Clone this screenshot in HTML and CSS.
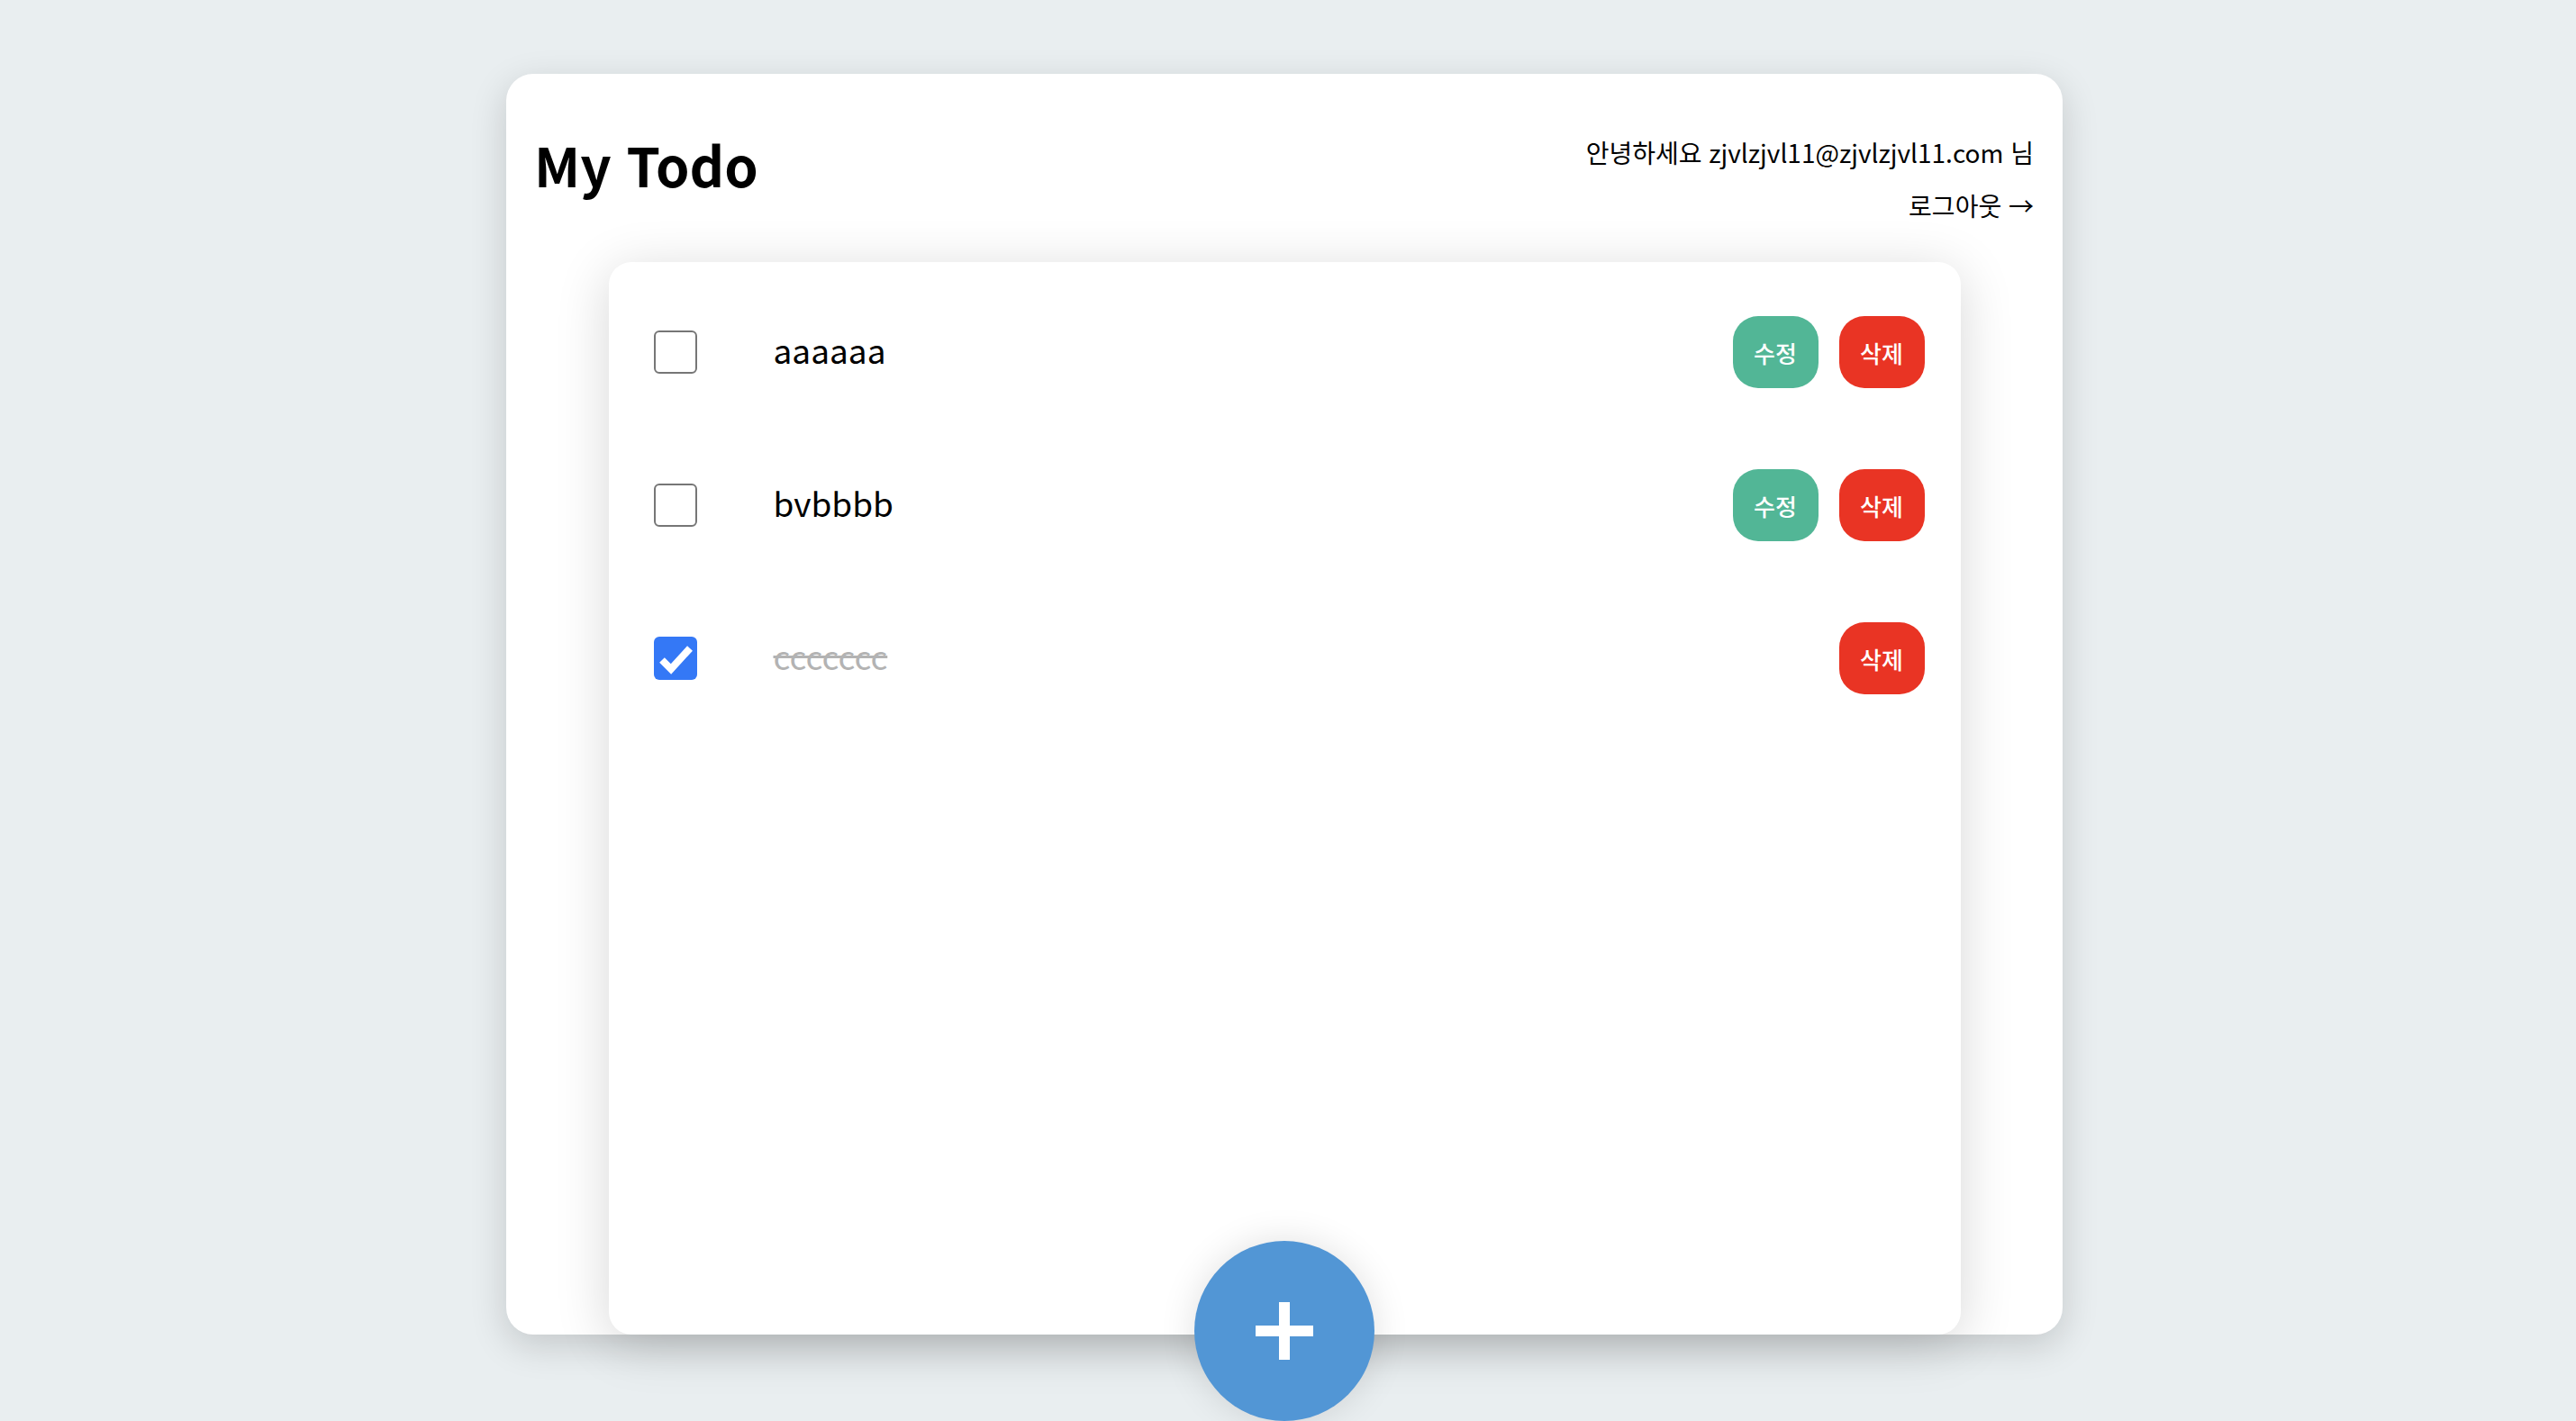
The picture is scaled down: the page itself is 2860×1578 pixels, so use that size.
FILE: index.html
```html
<!DOCTYPE html>
<html lang="ko">
<head>
<meta charset="utf-8">
<title>My Todo</title>
<link rel="stylesheet" href="styles.css">
</head>
<body>
<div class="app">
  <header class="header">
    <h1 class="title">My Todo</h1>
    <div class="user">
      <div class="user-line">안녕하세요 zjvlzjvl11@zjvlzjvl11.com 님</div>
      <div class="user-line">로그아웃 →</div>
    </div>
  </header>
  <main class="list">
    <div class="row">
      <span class="check"></span>
      <span class="text">aaaaaa</span>
      <div class="actions">
        <button class="btn btn-edit">수정</button>
        <button class="btn btn-del">삭제</button>
      </div>
    </div>
    <div class="row">
      <span class="check"></span>
      <span class="text">bvbbbb</span>
      <div class="actions">
        <button class="btn btn-edit">수정</button>
        <button class="btn btn-del">삭제</button>
      </div>
    </div>
    <div class="row">
      <span class="check check-on"><svg viewBox="0 0 48 48" width="48" height="48"><polyline points="9,26 19,36 40,13" fill="none" stroke="#fff" stroke-width="8"/></svg></span>
      <span class="text text-done">ccccccc</span>
      <div class="actions">
        <button class="btn btn-del">삭제</button>
      </div>
    </div>
  </main>
  <button class="add"><svg viewBox="0 0 64 64" width="64" height="64"><rect x="0" y="26" width="64" height="12" fill="#fff"/><rect x="26" y="0" width="12" height="64" fill="#fff"/></svg></button>
</div>
</body>
</html>
```
FILE: styles.css
```css
html, body {
  margin: 0;
  padding: 0;
}
body {
  background: #e9eef0;
  font-family: "Noto Sans CJK KR", "Noto Sans", sans-serif;
  color: #000;
  height: 1578px;
  overflow: hidden;
  padding-right: 8px;
}
.app {
  position: relative;
  width: 1728px;
  height: 1400px;
  margin: 82px auto 0;
  background: #fff;
  border-radius: 30px;
  box-shadow: 0 12px 40px rgba(0, 0, 0, 0.16);
  display: flex;
  flex-direction: column;
}
.header {
  height: 209px;
  box-sizing: border-box;
  padding: 59px 32px 0 31px;
  display: flex;
  justify-content: space-between;
  align-items: flex-start;
}
.title {
  margin: 0;
  font-size: 60px;
  line-height: 82px;
  font-weight: 700;
}
.user {
  margin-top: 8px;
  display: flex;
  flex-direction: column;
  align-items: flex-end;
  gap: 19px;
}
.user-line {
  font-size: 28px;
  line-height: 40px;
}
.list {
  flex: 1;
  width: 1501px;
  margin: 0 auto;
  box-sizing: border-box;
  padding: 15px 40px 0 50px;
  background: #fff;
  border-radius: 25px;
  box-shadow: 0 10px 60px rgba(0, 0, 0, 0.16);
}
.row {
  height: 170px;
  display: flex;
  align-items: center;
}
.check {
  width: 48px;
  height: 48px;
  box-sizing: border-box;
  border: 2px solid #767676;
  border-radius: 6px;
  flex: none;
}
.check svg {
  display: block;
}
.check-on {
  border: none;
  background: #3478f6;
}
.text {
  flex: 1;
  margin-left: 85px;
  font-size: 37px;
  line-height: 52px;
  padding-bottom: 6px;
}
.text-done {
  color: #b3b3b3;
  text-decoration: line-through;
}
.actions {
  display: flex;
  gap: 23px;
}
.btn {
  width: 95px;
  height: 80px;
  border: none;
  border-radius: 28px;
  color: #fff;
  font-family: "Noto Sans CJK KR", sans-serif;
  font-size: 26px;
  font-weight: 500;
  padding: 0;
}
.btn-edit {
  background: #52b696;
}
.btn-del {
  background: #e93424;
}
.add {
  position: absolute;
  left: 50%;
  bottom: -96px;
  width: 200px;
  height: 200px;
  margin-left: -100px;
  border: none;
  border-radius: 50%;
  background: #5296d5;
  box-shadow: 0 0 40px rgba(0, 0, 0, 0.12);
  display: flex;
  align-items: center;
  justify-content: center;
  padding: 0;
}
.add svg {
  display: block;
}
```
